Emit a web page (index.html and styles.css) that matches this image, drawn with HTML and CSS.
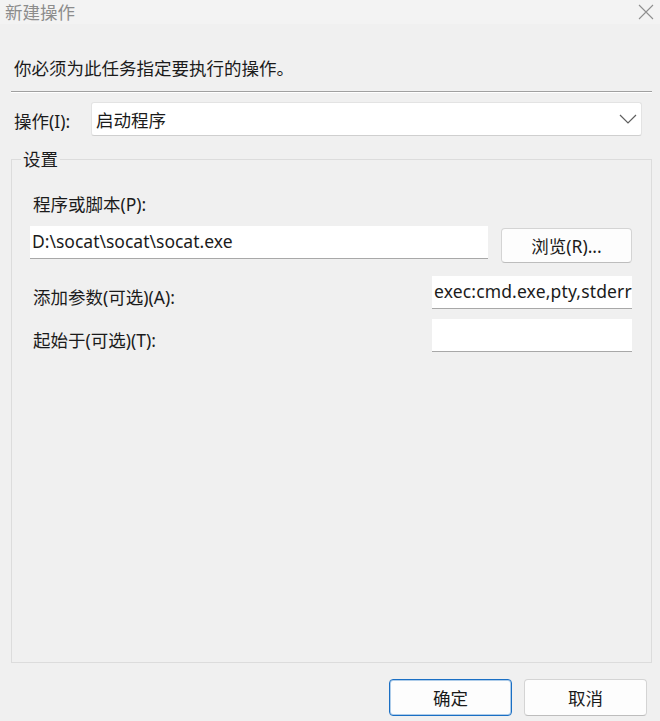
FILE: index.html
```html
<!DOCTYPE html>
<html lang="zh-CN">
  <head>
    <meta charset="UTF-8" />
    <meta name="viewport" content="width=device-width, initial-scale=1.0" />
    <title>新建操作</title>
    <link rel="stylesheet" href="styles.css">
  </head>
  <body>
    <div class="dialog">
      <div class="titlebar">
        <span class="title">新建操作</span>
        <svg class="close" width="16" height="16" viewBox="0 0 16 16">
          <path d="M1 1 L15 15 M15 1 L1 15" stroke="#8f8f8f" stroke-width="1.1" fill="none" />
        </svg>
      </div>

      <div class="content">
        <div class="intro">你必须为此任务指定要执行的操作。</div>
        <div class="separator"></div>

        <div class="action-row">
          <span class="label">操作(I):</span>
          <div class="combo">
            <span>启动程序</span>
            <svg width="18" height="10" viewBox="0 0 18 10">
              <path d="M1 1 L9 9 L17 1" stroke="#5f5f5f" stroke-width="1.2" fill="none" />
            </svg>
          </div>
        </div>

        <fieldset class="settings">
          <legend>设置</legend>
          <div class="settings-body">
            <div class="field-label">程序或脚本(P):</div>
            <div class="program-row">
              <div class="textbox program">D:\socat\socat\socat.exe</div>
              <button class="btn browse">浏览(R)...</button>
            </div>
            <div class="option-row">
              <span class="field-label">添加参数(可选)(A):</span>
              <div class="textbox short">exec:cmd.exe,pty,stderr</div>
            </div>
            <div class="option-row">
              <span class="field-label">起始于(可选)(T):</span>
              <div class="textbox short"></div>
            </div>
          </div>
        </fieldset>
      </div>

      <div class="footer">
        <button class="btn primary">确定</button>
        <button class="btn">取消</button>
      </div>
    </div>
  </body>
</html>
```

FILE: styles.css
```css
* {
  box-sizing: border-box;
}

body {
  margin: 0;
  background: #f0f0f0;
  color: #1b1b1b;
  font-family: "Noto Sans", "Noto Sans CJK SC", sans-serif;
  font-size: 17.5px;
}

.dialog {
  width: 660px;
  height: 721px;
  overflow: hidden;
}

.titlebar {
  height: 24px;
  background: #f3f3f3;
  display: flex;
  justify-content: space-between;
  align-items: center;
  padding: 0 6px 0 5px;
}

.title {
  color: #8c8c8c;
  line-height: 24px;
}

.close {
  display: block;
}

.content {
  padding: 0 8px 0 11px;
}

.intro {
  margin: 32px 0 0 3px;
  line-height: 24px;
}

.separator {
  margin-top: 11px;
  width: 641px;
  border-top: 1px solid #a0a0a0;
  border-bottom: 1px solid #ffffff;
}

.action-row {
  display: flex;
  align-items: center;
  margin-top: 9px;
}

.label {
  width: 77px;
  margin-left: 3px;
  padding-top: 3px;
  line-height: 24px;
}

.combo {
  width: 551px;
  height: 34px;
  background: #fff;
  border: 1px solid #e3e3e3;
  border-bottom-color: #cfcfcf;
  border-radius: 3px;
  display: flex;
  justify-content: space-between;
  align-items: center;
  padding: 0 4px 0 4px;
}

.combo svg {
  display: block;
}

.settings {
  margin: 11px 0 0;
  width: 641px;
  border: 1px solid #dcdcdc;
  padding: 0 8px;
}

.settings legend {
  margin-left: 1px;
  padding: 0 2px;
  line-height: 24px;
}

.settings-body {
  height: 491px;
  padding: 21px 11px 0 10px;
}

.field-label {
  padding-left: 3px;
  line-height: 24px;
}

.textbox {
  height: 33px;
  background: #fff;
  border-bottom: 1px solid #a8a8a8;
  padding: 0 2px;
  line-height: 31px;
  white-space: nowrap;
  overflow: hidden;
}

.program-row {
  display: flex;
  align-items: flex-start;
  gap: 13px;
  margin-top: 10px;
}

.program {
  width: 458px;
}

.short {
  width: 200px;
  letter-spacing: 0.15px;
}

.option-row {
  display: flex;
  justify-content: space-between;
  align-items: flex-start;
  margin-top: 13px;
}

.option-row + .option-row {
  margin-top: 10px;
}

.option-row .field-label {
  margin-top: 9px;
}

.btn {
  font: inherit;
  color: #1b1b1b;
  width: 123px;
  height: 37px;
  background: #fdfdfd;
  border: 1px solid #d4d4d4;
  border-bottom-color: #bdbdbd;
  border-radius: 4px;
  padding: 0;
}

.browse {
  width: 131px;
  height: 35px;
  margin-top: 2px;
}

.primary {
  border: 1px solid #1a6fc4;
  box-shadow: inset 0 0 0 1px rgba(26, 111, 196, 0.35);
}

.footer {
  display: flex;
  justify-content: flex-end;
  gap: 12px;
  margin-top: 16px;
  padding-right: 13px;
}
```
